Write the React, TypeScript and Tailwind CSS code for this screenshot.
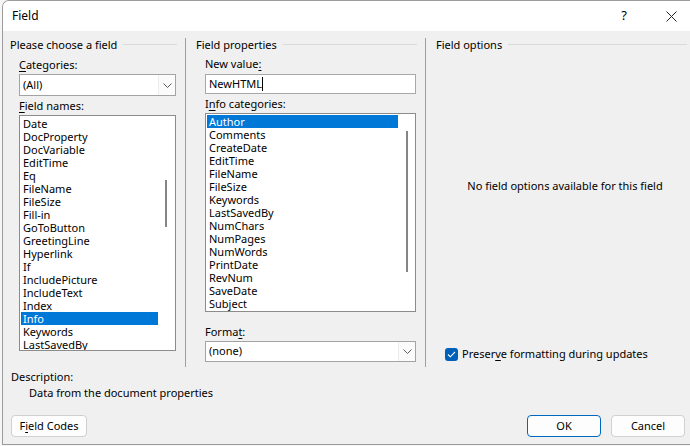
import React from "react";

const fieldNames = [
  "Date","DocProperty","DocVariable","EditTime","Eq","FileName","FileSize","Fill-in","GoToButton","GreetingLine","Hyperlink","If","IncludePicture","IncludeText","Index","Info","Keywords","LastSavedBy",
];
const infoCats = [
  "Author","Comments","CreateDate","EditTime","FileName","FileSize","Keywords","LastSavedBy","NumChars","NumPages","NumWords","PrintDate","RevNum","SaveDate","Subject",
];

function Chevron() {
  return (
    <svg width="9" height="5" viewBox="0 0 9 5" fill="none">
      <polyline points="0.5,0.5 4.5,4.5 8.5,0.5" stroke="#5a5a5a" strokeWidth="1" />
    </svg>
  );
}

function Header({ title, mr }: { title: string; mr: string }) {
  return (
    <div className={`flex items-center h-[14px] leading-[14px] ${mr}`}>
      <span className="whitespace-nowrap">{title}</span>
      <div className="flex-1 h-px bg-[#dadada] ml-[6px] mt-[-1px]" />
    </div>
  );
}

export default function App() {
  return (
    <div
      className="w-[690px] h-[446px] bg-[#f6f6f6] overflow-hidden text-[11px] text-black"
      style={{ fontFamily: '"Noto Sans", "Open Sans", sans-serif' }}
    >
      <div className="ml-[2px] h-[445px] border-l border-t border-b border-[#9c9c9c] rounded-tl-[7px] bg-[#f0f0f0] flex flex-col overflow-hidden">
        {/* Title bar */}
        <div className="h-[30px] bg-white flex items-center shrink-0">
          <span className="pl-[9px] text-[12px]">Field</span>
          <div className="flex-1" />
          <span className="w-[20px] text-center text-[13px] mr-[32px]">?</span>
          <svg width="11" height="11" viewBox="0 0 11 11" className="mr-[13px]">
            <line x1="0.5" y1="0.5" x2="10.5" y2="10.5" stroke="#222" strokeWidth="1" />
            <line x1="10.5" y1="0.5" x2="0.5" y2="10.5" stroke="#222" strokeWidth="1" />
          </svg>
        </div>

        {/* Main */}
        <div className="flex pt-[7px] shrink-0">
          {/* Left column */}
          <div className="w-[183px] h-[329px] border-r border-[#a0a0a0] flex flex-col">
            <div className="pl-[7px]">
              <Header title="Please choose a field" mr="mr-[8px]" />
            </div>
            <div className="pl-[16px] pr-[9px] flex flex-col">
              <div className="mt-[6px] leading-[14px] h-[14px]">
                <span className="underline underline-offset-2">C</span>ategories:
              </div>
              <div className="mt-[2px] h-[22px] border border-[#a3a3a3] bg-white flex items-center">
                <span className="pl-[3px] flex-1">(All)</span>
                <div className="w-[17px] h-full flex items-center justify-center bg-[#fbfbfb] border-l border-[#ececec]">
                  <Chevron />
                </div>
              </div>
              <div className="mt-[3px] leading-[14px] h-[14px]">
                <span className="underline underline-offset-2">F</span>ield names:
              </div>
              <div className="mt-[2px] h-[236px] border border-[#8c8c8c] bg-white p-[1px] flex overflow-hidden">
                <div className="w-[137px] flex flex-col">
                  {fieldNames.map((n) => (
                    <div
                      key={n}
                      className={`h-[13px] leading-[13px] pl-[2px] whitespace-nowrap ${n === "Info" ? "bg-[#0078d7] text-white" : ""}`}
                    >
                      {n}
                    </div>
                  ))}
                </div>
                <div className="flex-1">
                  <div className="ml-[7px] mt-[63px] w-[2px] h-[47px] bg-[#858585]" />
                </div>
              </div>
            </div>
          </div>

          {/* Middle column */}
          <div className="w-[240px] h-[329px] border-r border-[#a0a0a0] flex flex-col">
            <div className="pl-[10px]">
              <Header title="Field properties" mr="mr-[8px]" />
            </div>
            <div className="pl-[19px] pr-[9px] flex flex-col">
              <div className="mt-[5px] leading-[14px] h-[14px]">
                New value<span className="underline underline-offset-2">:</span>
              </div>
              <div className="mt-[3px] h-[20px] border border-[#a8a8a8] bg-white flex items-center">
                <span className="pl-[3px]">NewHTML</span>
                <span className="w-px h-[14px] bg-black" />
              </div>
              <div className="mt-[3px] leading-[14px] h-[14px]">
                I<span className="underline underline-offset-2">n</span>fo categories:
              </div>
              <div className="mt-[2px] h-[199px] border border-[#8c8c8c] bg-white p-[1px] flex overflow-hidden">
                <div className="w-[191px] flex flex-col">
                  {infoCats.map((n) => (
                    <div
                      key={n}
                      className={`h-[13px] leading-[13px] pl-[2px] whitespace-nowrap ${n === "Author" ? "bg-[#0078d7] text-white" : ""}`}
                    >
                      {n}
                    </div>
                  ))}
                </div>
                <div className="flex-1">
                  <div className="ml-[8px] mt-[16px] w-[2px] h-[141px] bg-[#858585]" />
                </div>
              </div>
              <div className="mt-[13px] leading-[14px] h-[14px]">
                Forma<span className="underline underline-offset-2">t</span>:
              </div>
              <div className="mt-[2px] h-[21px] border border-[#a3a3a3] bg-white flex items-center">
                <span className="pl-[3px] flex-1">(none)</span>
                <div className="w-[17px] h-full flex items-center justify-center bg-[#fbfbfb] border-l border-[#ececec]">
                  <Chevron />
                </div>
              </div>
            </div>
          </div>

          {/* Right column */}
          <div className="flex-1 h-[329px] flex flex-col">
            <div className="pl-[10px]">
              <Header title="Field options" mr="mr-[3px]" />
            </div>
            <div className="pl-[14px] mt-[127px] leading-[14px] h-[14px] text-center">
              No field options available for this field
            </div>
            <div className="pl-[19px] mt-[154px] flex items-center h-[14px]">
              <div className="w-[13px] h-[13px] rounded-[3px] bg-[#005fb8] flex items-center justify-center">
                <svg width="9" height="7" viewBox="0 0 9 7" fill="none">
                  <polyline points="1,3.5 3.3,5.8 8,1" stroke="white" strokeWidth="1.1" />
                </svg>
              </div>
              <span className="ml-[4px] leading-[14px] whitespace-nowrap">
                Preser<span className="underline underline-offset-2">v</span>e formatting during updates
              </span>
            </div>
          </div>
        </div>

        {/* Bottom */}
        <div className="flex flex-col">
          <div className="mt-[3px] pl-[8px] leading-[14px] h-[14px]">Description:</div>
          <div className="mt-[2px] pl-[26px] leading-[14px] h-[14px]">Data from the document properties</div>
          <div className="mt-[15px] flex items-center">
            <div className="ml-[8px] w-[76px] h-[22px] rounded-[4px] border border-[#d0d0d0] bg-[#fdfdfd] flex items-center justify-center">
              F<span className="underline underline-offset-2">i</span>eld Codes
            </div>
            <div className="flex-1" />
            <div className="w-[74px] h-[22px] rounded-[4px] border border-[#0067c0] bg-[#fdfdfd] flex items-center justify-center">
              OK
            </div>
            <div className="ml-[10px] mr-[5px] w-[74px] h-[22px] rounded-[4px] border border-[#d0d0d0] bg-[#fdfdfd] flex items-center justify-center">
              Cancel
            </div>
          </div>
        </div>
      </div>
    </div>
  );
}
